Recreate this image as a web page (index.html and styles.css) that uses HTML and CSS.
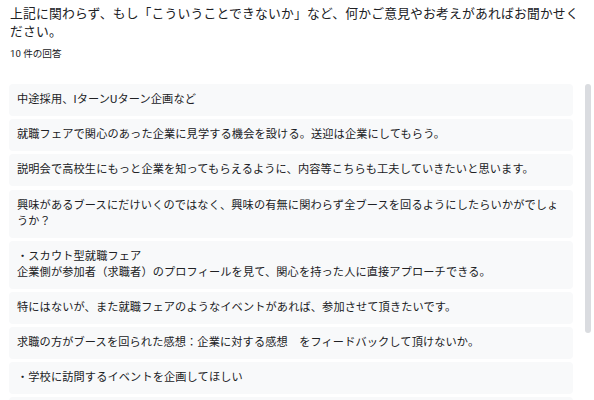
FILE: index.html
```html
<!DOCTYPE html>
<html lang="ja">
<head>
<meta charset="utf-8">
<link rel="stylesheet" href="styles.css">
</head>
<body>
<div class="header">
  <div class="title">上記に関わらず、もし「こういうことできないか」など、何かご意見やお考えがあればお聞かせください。</div>
  <div class="count">10 件の回答</div>
</div>
<div class="panel">
  <div class="list">
    <div class="answer">中途採用、Iターン​Uターン企画など</div>
    <div class="answer">就職フェアで関心のあった企業に見学する機会を設ける。送迎は企業にしてもらう。</div>
    <div class="answer">説明会で高校生にもっと企業を知ってもらえるように、内容等こちらも工夫していきたいと思います。</div>
    <div class="answer">興味があるブースにだけいくのではなく、興味の有無に関わらず全ブースを回るようにしたらいかがでしょうか？</div>
    <div class="answer">・スカウト型就職フェア<br>企業側が参加者（求職者）のプロフィールを見て、関心を持った人に直接アプローチできる。</div>
    <div class="answer">特にはないが、また就職フェアのようなイベントがあれば、参加させて頂きたいです。</div>
    <div class="answer">求職の方がブースを回られた感想：企業に対する感想　をフィードバックして頂けないか。</div>
    <div class="answer">・学校に訪問するイベントを企画してほしい</div>
    <div class="answer answer-empty"></div>
  </div>
  <div class="scrollbar"><div class="thumb"></div></div>
</div>
</body>
</html>
```
FILE: styles.css
```css
html, body {
  margin: 0;
  padding: 0;
  background: #ffffff;
  overflow: hidden;
}
body {
  width: 594px;
  height: 400px;
  font-family: Roboto, "Noto Sans CJK JP", sans-serif;
  color: #202124;
}
.header {
  padding: 4.5px 10px 0 10px;
}
.title {
  width: 571px;
  font-size: 12.8px;
  line-height: 18.5px;
  letter-spacing: 0.18px;
}
.count {
  margin-top: 6.1px;
  font-size: 9.6px;
  line-height: 12.8px;
}
.panel {
  display: flex;
  margin-top: 23.6px;
  padding-left: 9px;
  height: 330px;
  overflow: hidden;
}
.list {
  width: 564px;
  display: flex;
  flex-direction: column;
  gap: 3.2px;
}
.answer {
  background: #f8f9fa;
  border-radius: 4px;
  padding: 8px 12px 8px 8px;
  font-size: 11.2px;
  line-height: 16px;
  letter-spacing: 0.12px;
  line-break: strict;
}
.answer-empty {
  min-height: 16px;
}
.scrollbar {
  margin-left: 12px;
  width: 6px;
}
.thumb {
  width: 6px;
  height: 249px;
  background: #dadce0;
  border-radius: 3px;
}
```
